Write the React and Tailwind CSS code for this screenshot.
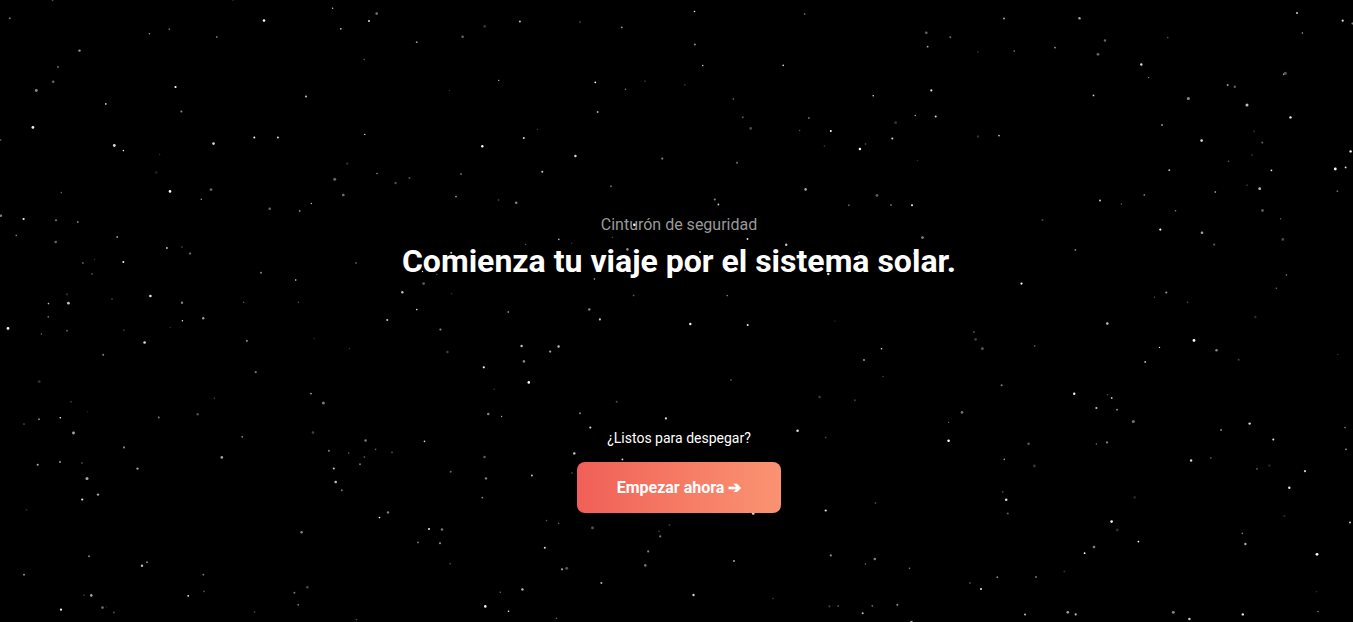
// Each star is [x, y, radius, opacity].
const STARS = [
  // top left
  [52.6, 0.3, 0.9, 0.3], [233, 0.5, 0.8, 0.15], [332.6, 8.3, 0.7, 0.8], [9.8, 18.3, 1, 0.45], [264, 20.5, 1.3, 1],
  [169.4, 29.2, 0.9, 0.4], [149.3, 33.7, 0.8, 0.6], [216.8, 37, 1, 0.4], [79.5, 50.6, 1.2, 0.6], [58, 67, 1, 0.4],
  [53.2, 81.8, 1.3, 0.4], [36.3, 90.5, 1.4, 0.55], [175.5, 87, 1.1, 1], [306, 96.5, 1.1, 0.7], [105.8, 103.9, 0.9, 0.8],
  [181.4, 111.5, 1, 0.55], [32.9, 127.4, 1.4, 0.95], [0.5, 140, 1, 0.3], [114.3, 145.5, 1.4, 0.85], [123.4, 150.6, 0.8, 0.9],
  [213.5, 143.6, 1.3, 0.85], [254.3, 137.5, 1, 0.95], [277.9, 137.5, 1, 0.85], [159.6, 154.5, 0.7, 0.2], [156.2, 172.4, 1.2, 0.15],
  [334.7, 179.2, 1.5, 0.4], [61.3, 192.6, 0.8, 0.4], [170, 191.4, 1.3, 1], [211, 189.6, 1.4, 0.4], [201.3, 199.3, 0.8, 0.6],
  [311.3, 203.5, 0.7, 0.75], [269.7, 208.7, 1.3, 0.4], [299.7, 211, 0.9, 0.5], [0.8, 215.7, 1.3, 0.5], [23.6, 219, 1.1, 0.95],
  [56, 220.2, 1, 0.5], [77.8, 222, 0.9, 0.5], [16.3, 235.4, 0.8, 0.5], [55.7, 242, 1.3, 0.4], [117.2, 237, 0.9, 0.6],
  [166.9, 248, 1, 0.75], [181.9, 247, 1, 0.2], [190, 253.6, 1.1, 0.45], [94.6, 259.5, 0.7, 0.18], [82.9, 263, 1, 0.35],
  [123.3, 262.1, 1, 0.95], [92, 274, 1, 0.25], [261, 272.8, 1, 0.5], [295.7, 280, 0.8, 0.9], [66.9, 294.3, 1.2, 0.15],
  [150.4, 296, 1.3, 0.9], [112, 299, 1, 0.2], [68.4, 303.2, 1.4, 0.75], [48.5, 303.6, 0.8, 0.75], [182, 302.8, 1.2, 0.5],
  [243.6, 302.2, 0.8, 0.35], [298.5, 302.2, 0.7, 0.35],
  // top centre left
  [376.7, 13.6, 1.3, 0.45], [369, 21, 1, 0.9], [340.8, 28.8, 0.9, 0.75], [519.9, 21.4, 1, 0.75], [484.7, 26.4, 1.4, 0.2],
  [462.6, 36.8, 1.3, 0.4], [416.7, 42.2, 0.9, 0.6], [580, 22, 0.9, 0.25], [621.8, 27.4, 0.9, 0.6], [364.2, 59.5, 0.8, 0.35],
  [498.7, 80.4, 0.7, 0.7], [449.4, 90.6, 0.7, 0.25], [595.3, 82.3, 0.9, 1], [645, 81.2, 0.9, 0.2], [625.5, 89.3, 0.8, 0.5],
  [597.7, 112, 1, 0.65], [364.8, 134.4, 0.7, 0.9], [523.8, 138, 1, 0.85], [537.6, 129.4, 0.7, 0.25], [482.3, 146.3, 1.2, 1],
  [575.4, 156, 1.2, 0.85], [662.3, 158.6, 1.1, 0.5], [347.2, 163.6, 1.2, 0.18], [542.3, 171.8, 1, 0.8], [377, 173.5, 0.8, 0.55],
  [395.6, 183, 1.2, 0.3], [409.4, 178, 1, 0.3], [461, 173.9, 1, 0.4], [611, 186.3, 1, 0.4], [343.3, 195, 1.3, 0.45],
  [456, 196.6, 0.9, 0.6], [498.6, 200, 0.8, 0.35], [516.2, 202.7, 1.3, 0.5], [634.4, 224.8, 1.4, 0.95], [612.5, 237.4, 0.8, 0.25],
  [558.8, 239.4, 0.8, 0.75], [525.6, 244.4, 0.7, 0.35], [571.6, 243.3, 0.7, 0.2], [627.4, 249.4, 1.3, 0.55], [451.2, 252.8, 1, 0.8],
  [356, 263, 1, 0.3], [422.5, 271.5, 0.7, 0.9], [436.8, 274.5, 0.8, 0.3], [594.4, 279, 0.8, 0.7], [423.6, 283.6, 1.4, 0.35],
  [402.3, 292.3, 1.2, 0.75], [451.6, 293.7, 0.8, 0.2], [633.6, 295.4, 0.9, 0.35], [416.8, 309.6, 0.8, 0.9], [589.3, 309.4, 1.2, 0.55],
  // top centre right
  [694.5, 11.5, 0.8, 0.9], [804.6, 14, 1, 0.35], [694.9, 44.5, 1, 0.55], [702.8, 65.5, 0.7, 0.9], [783.2, 65.4, 0.8, 0.85],
  [926.3, 32.8, 1.3, 0.4], [927.6, 46.7, 0.9, 0.65], [950.3, 37.3, 1, 0.45], [1004, 18.4, 1, 0.65], [978, 51.8, 0.9, 0.18],
  [1014.2, 51.1, 0.8, 0.5], [684.8, 85, 0.9, 0.18], [733.4, 99, 0.8, 0.5], [742.8, 117.3, 1.1, 0.3], [750.7, 128.4, 1.3, 0.3],
  [808.8, 118, 1, 0.4], [799.6, 130.5, 0.7, 0.35], [830.8, 130.9, 1, 1], [873.2, 95.8, 0.8, 0.9], [931.3, 90.4, 1.1, 0.85],
  [915.2, 115.5, 0.7, 0.75], [935.7, 116.6, 1, 0.85], [895.6, 122.7, 1.4, 0.2], [892.3, 138.4, 1, 0.85], [859.9, 149, 1.2, 1],
  [865.5, 144, 0.8, 0.35], [824.4, 146, 0.8, 0.25], [917.4, 160.6, 0.7, 0.2], [978, 136.5, 1.2, 0.18], [999, 135.6, 0.9, 0.75],
  [737, 162.8, 1, 0.45], [805.6, 189.4, 1.3, 0.65], [877, 195.5, 1.4, 0.35], [714.8, 199.5, 1.1, 0.5], [718.4, 204.5, 0.9, 0.8],
  [848.8, 205.3, 1, 0.35], [891, 205, 1, 0.4], [912, 205.2, 1, 0.95], [922.5, 237.6, 1.4, 0.5], [747.5, 239, 0.9, 0.9],
  [786.2, 244.7, 1.2, 0.8], [859, 252.4, 1, 0.2], [700, 252, 0.9, 0.9], [914, 253.6, 1, 0.5], [828.3, 274, 1.2, 0.9],
  [727.2, 295.6, 0.8, 0.5], [685, 270, 0.9, 0.5],
  // top right
  [1079.5, 18.3, 1.2, 0.65], [1297, 13, 1, 0.8], [1342.7, 20.7, 1.1, 0.85], [1352.5, 23.5, 1.1, 0.5], [1302.4, 33, 0.8, 0.65],
  [1105, 40.5, 1.2, 0.4], [1055, 47.6, 0.9, 0.6], [1098, 54.3, 1.4, 0.4], [1167.8, 37.6, 0.8, 0.35], [1141.3, 64.5, 1.2, 0.85],
  [1148.6, 77.6, 0.7, 0.5], [1093.5, 95.4, 0.9, 0.8], [1285.3, 73.3, 1.5, 0.35], [1283.6, 74.4, 0.8, 0.6], [1227.7, 85, 1, 0.6],
  [1234.8, 86.7, 1.3, 0.35], [1188.4, 98.4, 1.5, 0.55], [1247, 105, 1.5, 0.75], [1290.5, 117.4, 1.2, 0.95], [1162, 125, 1, 0.55],
  [1201.6, 140.6, 1.3, 0.85], [1254, 131.5, 0.9, 0.18], [1262.3, 142.6, 1.1, 0.35], [1350.6, 151.4, 1.2, 1], [1252, 155, 0.9, 0.18],
  [1228.5, 161.2, 0.8, 0.4], [1169.3, 170.2, 0.9, 0.8], [1271.4, 170.3, 0.9, 0.9], [1335.3, 169, 1.4, 1], [1345.6, 167.4, 0.9, 0.95],
  [1247, 185.3, 1, 0.18], [1259.7, 188.7, 1.4, 0.7], [1215.3, 192, 0.9, 0.55], [1337.4, 191.2, 0.9, 0.4], [1144.3, 195, 0.9, 0.45],
  [1100, 200.5, 1, 0.8], [1121.4, 204, 0.8, 0.4], [1262.5, 210.5, 1.4, 0.35], [1175.5, 210.8, 0.8, 0.55], [1042.5, 220, 1.1, 0.25],
  [1280.5, 218.7, 0.7, 0.4], [1160.3, 229.6, 1.1, 1], [1202, 232.8, 1.3, 0.65], [1214.2, 244.6, 1.1, 0.35], [1282.8, 239.4, 1.3, 0.3],
  [1075.4, 250, 0.9, 0.5], [1286.4, 275, 0.8, 0.55], [1276.4, 288.3, 0.8, 0.4], [1021.5, 283.6, 1.1, 1], [1166.3, 292.5, 1.1, 0.55],
  [1154.5, 297.3, 0.7, 0.3], [1187.5, 302.2, 0.8, 0.3],
  // bottom left
  [8, 328.4, 1.4, 1], [48.3, 316.8, 0.9, 0.45], [41.4, 334, 0.8, 0.45], [67, 330.7, 1, 0.35], [123.8, 330.2, 0.9, 0.2],
  [170.3, 327.4, 0.7, 0.2], [182.4, 320.8, 0.7, 0.95], [203.2, 318.3, 1.2, 0.6], [144.6, 342.5, 1.3, 0.85], [103.2, 354.8, 1, 0.5],
  [246.9, 340.8, 1.1, 0.5], [314.2, 338.6, 0.8, 0.15], [39.2, 381.6, 1.4, 0.2], [255.7, 372.2, 1.1, 0.45], [71, 401.7, 1, 0.2],
  [87.4, 411.8, 0.8, 0.13], [60.3, 417.7, 0.8, 1], [39, 419.2, 1, 0.5], [24, 424.2, 1.1, 0.2], [214.4, 398.2, 0.7, 0.3],
  [197.7, 414.2, 1.2, 0.3], [158.8, 417.5, 0.9, 0.5], [311, 393.6, 0.9, 0.65], [323.4, 403.1, 1.5, 0.45], [73.5, 433, 1.4, 0.65],
  [242.2, 436.8, 0.9, 0.55], [313, 432.6, 1.3, 0.25], [124, 447.4, 1.1, 0.5], [328.9, 450.7, 1, 0.5], [221.8, 457.4, 1.3, 0.65],
  [37.7, 464.8, 1, 0.7], [60, 462, 1, 0.6], [82, 463, 0.9, 0.25], [137.5, 468.6, 1.2, 0.6], [87, 478.4, 1.5, 0.65],
  [333.8, 468.6, 1, 0.8], [335.7, 482, 1.3, 0.75], [98, 494.6, 1.2, 0.65], [82.2, 499.5, 1.1, 0.9], [26.5, 509.8, 0.9, 0.18],
  [301.6, 532.2, 1.3, 0.5], [89, 556.2, 1, 0.5], [147, 562.2, 1, 0.5], [142, 565.8, 1.2, 0.75], [24, 574.8, 1, 0.55],
  [203.4, 574.7, 0.9, 0.5], [307.4, 587.3, 1.2, 0.3], [204, 591.4, 0.8, 0.35], [294.4, 592.8, 1, 0.45], [188.2, 595.8, 0.9, 0.95],
  [84, 595.2, 0.9, 0.2], [91.3, 595.4, 1.3, 0.65], [298.2, 604.8, 0.9, 0.5], [102.5, 607.6, 1.4, 0.4], [106.5, 607, 0.7, 0.15],
  [61, 609.7, 1.1, 0.95], [113.8, 612.6, 1, 0.3], [254.5, 612, 0.8, 0.3],
  // bottom centre left
  [387.2, 320, 1.1, 0.75], [508.3, 312, 0.9, 0.5], [440.4, 329.6, 1.1, 0.5], [599.9, 319.4, 1.1, 0.75], [349.4, 348.5, 0.7, 0.2],
  [447.4, 352, 1.2, 0.25], [521.6, 346, 1.2, 0.75], [558.6, 346.5, 1.2, 0.75], [550.2, 351.6, 1.1, 0.65], [523.9, 361.4, 1.3, 0.5],
  [483.8, 367.3, 1.1, 0.95], [528.8, 382.4, 1.3, 1], [494.2, 389.2, 0.8, 0.2], [616.7, 401.8, 1, 0.3], [488.3, 414, 1.3, 0.5],
  [501.6, 416.5, 0.7, 0.65], [580, 413.2, 1, 0.5], [590.3, 427.6, 1.1, 0.8], [665.9, 418.4, 1.1, 0.85], [365.6, 440.5, 1.2, 0.5],
  [424.5, 441.4, 0.8, 0.85], [375.5, 449.3, 0.9, 0.35], [348.7, 453, 0.8, 0.4], [392, 452.4, 0.8, 0.35], [364.4, 457, 0.9, 0.3],
  [360, 464.3, 1, 0.45], [484.5, 457, 1.3, 0.35], [574.3, 453.4, 1.2, 0.8], [622.4, 459.4, 0.9, 0.9], [450.7, 471.8, 1, 0.4],
  [486, 478.4, 1.2, 0.5], [531.9, 475.4, 1, 0.75], [572, 473, 1.1, 0.2], [341.8, 490.2, 1, 0.45], [482.3, 497.6, 0.9, 0.55],
  [388, 512.4, 1.2, 0.5], [379.5, 517.6, 0.8, 1], [429, 529, 1, 0.95], [442, 529.5, 1.3, 0.45], [546.5, 520.6, 0.8, 0.35],
  [558.6, 523.4, 0.8, 0.35], [592.5, 527.8, 1.5, 0.3], [669.4, 525, 1, 0.2], [418, 542.4, 0.9, 0.5], [440, 543.3, 1, 0.6],
  [544.8, 547.8, 1, 0.85], [659, 531.4, 0.8, 0.25], [660.2, 536.4, 1.1, 0.45], [648.2, 551.4, 1.1, 0.5], [645.3, 565.4, 1.3, 0.45],
  [450.2, 563.7, 0.9, 0.25], [562, 569.3, 1.1, 0.65], [566.7, 568.3, 1.4, 0.35], [601.4, 583, 1, 0.7], [522.4, 589.4, 1.2, 0.75],
  [500.3, 592.3, 0.8, 0.4], [485.3, 606.4, 1.3, 0.95], [508.5, 611.3, 0.8, 1], [556.5, 618.3, 0.8, 0.4], [356.5, 619.6, 0.8, 0.3],
  // bottom centre right
  [690.3, 324, 1.2, 0.95], [747.7, 325, 1, 0.9], [835, 321.2, 0.9, 0.1], [973.9, 332, 1, 0.3], [975.6, 339.4, 1.3, 0.25],
  [982.4, 348.7, 1.4, 0.35], [881.5, 348.8, 0.8, 0.9], [864, 360, 0.9, 0.65], [883, 376.5, 0.8, 0.25], [731, 380, 1.1, 0.25],
  [819.6, 397, 1.2, 0.25], [854.8, 400.3, 1, 0.25], [1001.6, 385.2, 1, 0.5], [962, 412.4, 1.3, 0.45], [948.6, 422.4, 0.7, 0.4],
  [948.6, 440.8, 1.3, 1], [797.6, 430.8, 1.3, 0.85], [825.7, 437.5, 0.9, 0.25], [1004.3, 459.4, 0.8, 0.65], [1002.7, 491.8, 0.9, 0.3],
  [1006.2, 499.8, 1.3, 0.85], [1007.7, 513.5, 1.1, 0.35], [875.5, 503, 0.8, 0.4], [825.7, 510.5, 1.1, 0.9], [753.2, 513.4, 1.4, 0.85],
  [734, 561, 1, 0.65], [830.8, 555.4, 1.1, 0.55], [874.8, 559, 1.3, 0.5], [865.4, 564, 0.8, 0.45], [909.5, 568.3, 0.8, 0.5],
  [997.3, 577.2, 0.9, 0.55], [970, 583, 1.1, 0.25], [981, 589, 1, 0.95], [693.5, 595, 1.2, 0.8], [773, 598.5, 0.8, 0.25],
  [829.5, 606.4, 1.1, 0.25], [838.2, 606, 1, 0.3], [872.3, 605.8, 0.9, 0.45], [897.3, 604.8, 1.1, 0.5], [862.7, 613.2, 1, 0.75],
  [911.5, 622, 1.3, 0.65],
  // bottom right
  [1107.3, 323.5, 1.3, 0.75], [1255.3, 317, 1.2, 0.18], [1194, 340.4, 1.4, 1], [1034.7, 346, 0.9, 0.3], [1159.5, 347.4, 0.7, 0.9],
  [1145.2, 361.9, 0.9, 0.8], [1216.5, 350.2, 1.2, 0.55], [1238.7, 359.8, 1, 0.25], [1337.7, 354.5, 0.8, 0.2], [1074.2, 393.8, 1.2, 0.95],
  [1107.4, 394.7, 0.8, 0.3], [1111.7, 398, 0.9, 0.75], [1096.4, 408, 1.1, 0.75], [1117, 409.7, 0.9, 0.6], [1133.3, 421.4, 1.5, 0.45],
  [1221, 430, 1, 0.5], [1249.6, 423.6, 1.2, 0.85], [1345, 427.5, 0.7, 0.65], [1028.6, 443.7, 1.3, 0.35], [1096.4, 444, 0.8, 0.45],
  [1107, 442.4, 1.1, 0.5], [1273.3, 439.4, 1, 0.9], [1346, 449.3, 0.9, 0.6], [1191.1, 460.5, 1.2, 0.85], [1210.8, 458, 0.9, 0.3],
  [1034.4, 466, 1.4, 0.2], [1257, 468.8, 0.9, 0.4], [1269.3, 465.6, 1.3, 0.13], [1305, 471.2, 1.1, 0.8], [1289.3, 487.8, 1.2, 0.9],
  [1134.6, 497.4, 1.3, 0.15], [1284.4, 516.2, 1.1, 0.15], [1111.6, 521.6, 1.3, 0.95], [1117.3, 530, 1.4, 0.18], [1350, 522.4, 1, 0.8],
  [1138.4, 541.6, 0.9, 1], [1242.3, 533.3, 0.9, 0.45], [1245.4, 544, 1.2, 0.65], [1094, 547, 1.3, 0.5], [1084.6, 553.2, 0.9, 1],
  [1317, 554.3, 1.4, 1], [1064.4, 571.6, 1, 0.18], [1036, 577, 1, 0.45], [1316.5, 591.6, 0.9, 0.15], [1318, 611.6, 0.8, 0.5],
  [1025, 614.4, 1, 0.75], [1067.8, 612.3, 1.3, 0.65], [1075.7, 614.4, 1.1, 0.75], [1173.3, 612.3, 1.4, 0.55], [1189.4, 619, 1.3, 0.75],
  [1242.8, 614.4, 1.2, 0.9],
];

function Starfield() {
  return (
    <svg className="absolute inset-0 h-full w-full" fill="#ffffff" aria-hidden="true">
      {STARS.map(([x, y, r, opacity]) => (
        <circle key={`${x}-${y}`} cx={x} cy={y} r={r} opacity={opacity} />
      ))}
    </svg>
  );
}

export default function App() {
  return (
    <div className="relative min-h-screen overflow-hidden bg-black font-['Roboto',sans-serif] text-white antialiased">
      <Starfield />
      <main className="relative flex min-h-screen flex-col items-center justify-center gap-[141px] pt-26 pl-[5px] text-center">
        <header>
          <p className="text-base text-[#999999]">Cinturón de seguridad</p>
          <h1 className="text-[32px] leading-[48px] font-bold">Comienza tu viaje por el sistema solar.</h1>
        </header>
        <section className="flex flex-col items-center gap-3">
          <p className="text-sm leading-6">¿Listos para despegar?</p>
          <button
            type="button"
            className="rounded-lg bg-linear-to-r from-[#f05f57] to-[#fa9372] px-10 py-3 text-base leading-[27px] font-bold text-white"
          >
            Empezar ahora ➔
          </button>
        </section>
      </main>
    </div>
  );
}
